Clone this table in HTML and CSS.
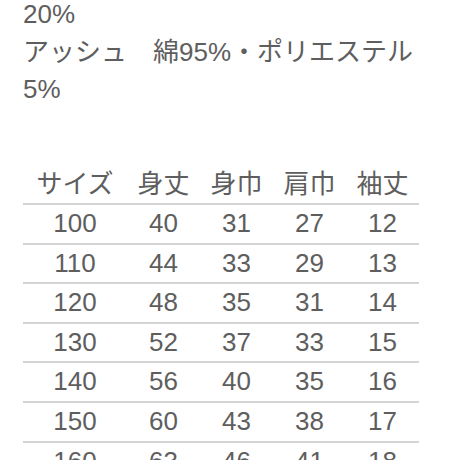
FILE: index.html
```html
<!DOCTYPE html>
<html lang="ja">
<head>
<meta charset="utf-8">
<link rel="stylesheet" href="styles.css">
</head>
<body>
<div class="content">
  <p class="spec">20%<br>アッシュ　綿95%・ポリエステル 5%</p>
  <table class="size-table">
    <colgroup>
      <col class="col-size">
      <col class="col-num">
      <col class="col-num">
      <col class="col-num">
      <col class="col-num">
    </colgroup>
    <thead>
      <tr><th>サイズ</th><th>身丈</th><th>身巾</th><th>肩巾</th><th>袖丈</th></tr>
    </thead>
    <tbody>
      <tr><td>100</td><td>40</td><td>31</td><td>27</td><td>12</td></tr>
      <tr><td>110</td><td>44</td><td>33</td><td>29</td><td>13</td></tr>
      <tr><td>120</td><td>48</td><td>35</td><td>31</td><td>14</td></tr>
      <tr><td>130</td><td>52</td><td>37</td><td>33</td><td>15</td></tr>
      <tr><td>140</td><td>56</td><td>40</td><td>35</td><td>16</td></tr>
      <tr><td>150</td><td>60</td><td>43</td><td>38</td><td>17</td></tr>
      <tr><td>160</td><td>63</td><td>46</td><td>41</td><td>18</td></tr>
    </tbody>
  </table>
</div>
</body>
</html>
```

FILE: styles.css
```css
html, body {
  margin: 0;
  padding: 0;
  background: #ffffff;
  overflow: hidden;
}

body {
  font-family: "Liberation Sans", "Noto Sans CJK JP", sans-serif;
  font-size: 26px;
  color: #5e5e5e;
}

.content {
  width: 396px;
  padding-left: 23px;
}

.spec {
  margin: -4px 0 0 0;
  line-height: 37.5px;
}

.size-table {
  margin-top: 57px;
  width: 396px;
  border-collapse: collapse;
  table-layout: fixed;
}

.col-size {
  width: 104px;
}

.col-num {
  width: 73px;
}

.size-table th,
.size-table td {
  padding: 0;
  font-weight: normal;
  text-align: center;
  line-height: 37.6px;
  border-bottom: 2px solid #d4d4d4;
}
```
